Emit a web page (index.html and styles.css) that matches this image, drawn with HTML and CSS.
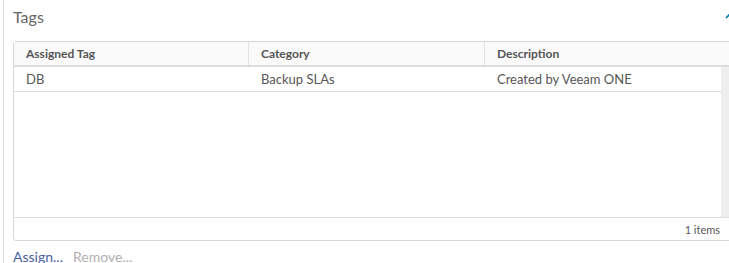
FILE: index.html
```html
<!DOCTYPE html>
<html lang="en">
<head>
    <meta charset="UTF-8">
    <title>Tags</title>
    <link rel="stylesheet" href="styles.css">
</head>
<body>

<div class="panel">
    <div class="panel-head">
        <span class="title">Tags</span>
        <svg class="chevron" width="14" height="10" viewBox="0 0 14 10">
            <path d="M2 8 L7 3 L12 8" fill="none" stroke="#0079b8" stroke-width="1.6"/>
        </svg>
    </div>

    <div class="grid">
        <div class="grid-head">
            <div class="cell col1">Assigned Tag</div>
            <div class="cell col2">Category</div>
            <div class="cell col3">Description</div>
        </div>
        <div class="grid-body">
            <div class="rows">
                <div class="row">
                    <div class="cell col1">DB</div>
                    <div class="cell col2">Backup SLAs</div>
                    <div class="cell col3">Created by Veeam ONE</div>
                </div>
            </div>
            <div class="scrollbar"></div>
        </div>
        <div class="grid-foot">1 items</div>
    </div>

    <div class="actions">
        <a class="link">Assign...</a>
        <a class="link disabled">Remove...</a>
    </div>
</div>

</body>
</html>
```

FILE: styles.css
```css
body {
    margin: 0;
    font-family: 'Lato', sans-serif;
    color: #565656;
    background: #fff;
    overflow: hidden;
}
.panel {
    margin-left: 3px;
    border-left: 1px solid #dcdcdc;
    padding-left: 9px;
    height: 263px;
}
.panel-head {
    display: flex;
    justify-content: space-between;
    align-items: flex-start;
    height: 41px;
    width: 730px;
}
.title {
    font-size: 16px;
    margin-top: 7px;
    color: #666;
}
.chevron {
    margin-top: 10px;
    margin-right: 5px;
}
.grid {
    width: 730px;
    height: 198px;
    border: 1px solid #d7d7d7;
    border-radius: 3px;
    display: flex;
    flex-direction: column;
    font-size: 13px;
}
.grid-head {
    display: flex;
    height: 23px;
    background: #fafafa;
    border-bottom: 2px solid #ddd;
    font-weight: bold;
    font-size: 12px;
    color: #555;
}
.grid-head .cell {
    border-right: 1px solid #e2e2e2;
}
.cell {
    flex-shrink: 0;
    padding-left: 12px;
    display: flex;
    align-items: center;
    box-sizing: border-box;
    white-space: nowrap;
}
.col1 { width: 235px; }
.col2 { width: 236px; }
.col3 { width: 259px; }
.grid-body {
    flex: 1;
    display: flex;
}
.rows {
    width: 707px;
    overflow: hidden;
}
.row {
    display: flex;
    height: 24px;
    border-bottom: 1px solid #ddd;
}
.scrollbar {
    width: 9px;
    background: #eee;
}
.grid-foot {
    height: 22px;
    border-top: 1px solid #ddd;
    display: flex;
    align-items: center;
    justify-content: flex-end;
    padding-right: 24px;
    font-size: 11px;
}
.actions {
    display: flex;
    gap: 10px;
    margin-top: 7px;
    font-size: 14px;
}
.link {
    color: #4a5f9e;
}
.link.disabled {
    color: #b0b0b0;
}
```
